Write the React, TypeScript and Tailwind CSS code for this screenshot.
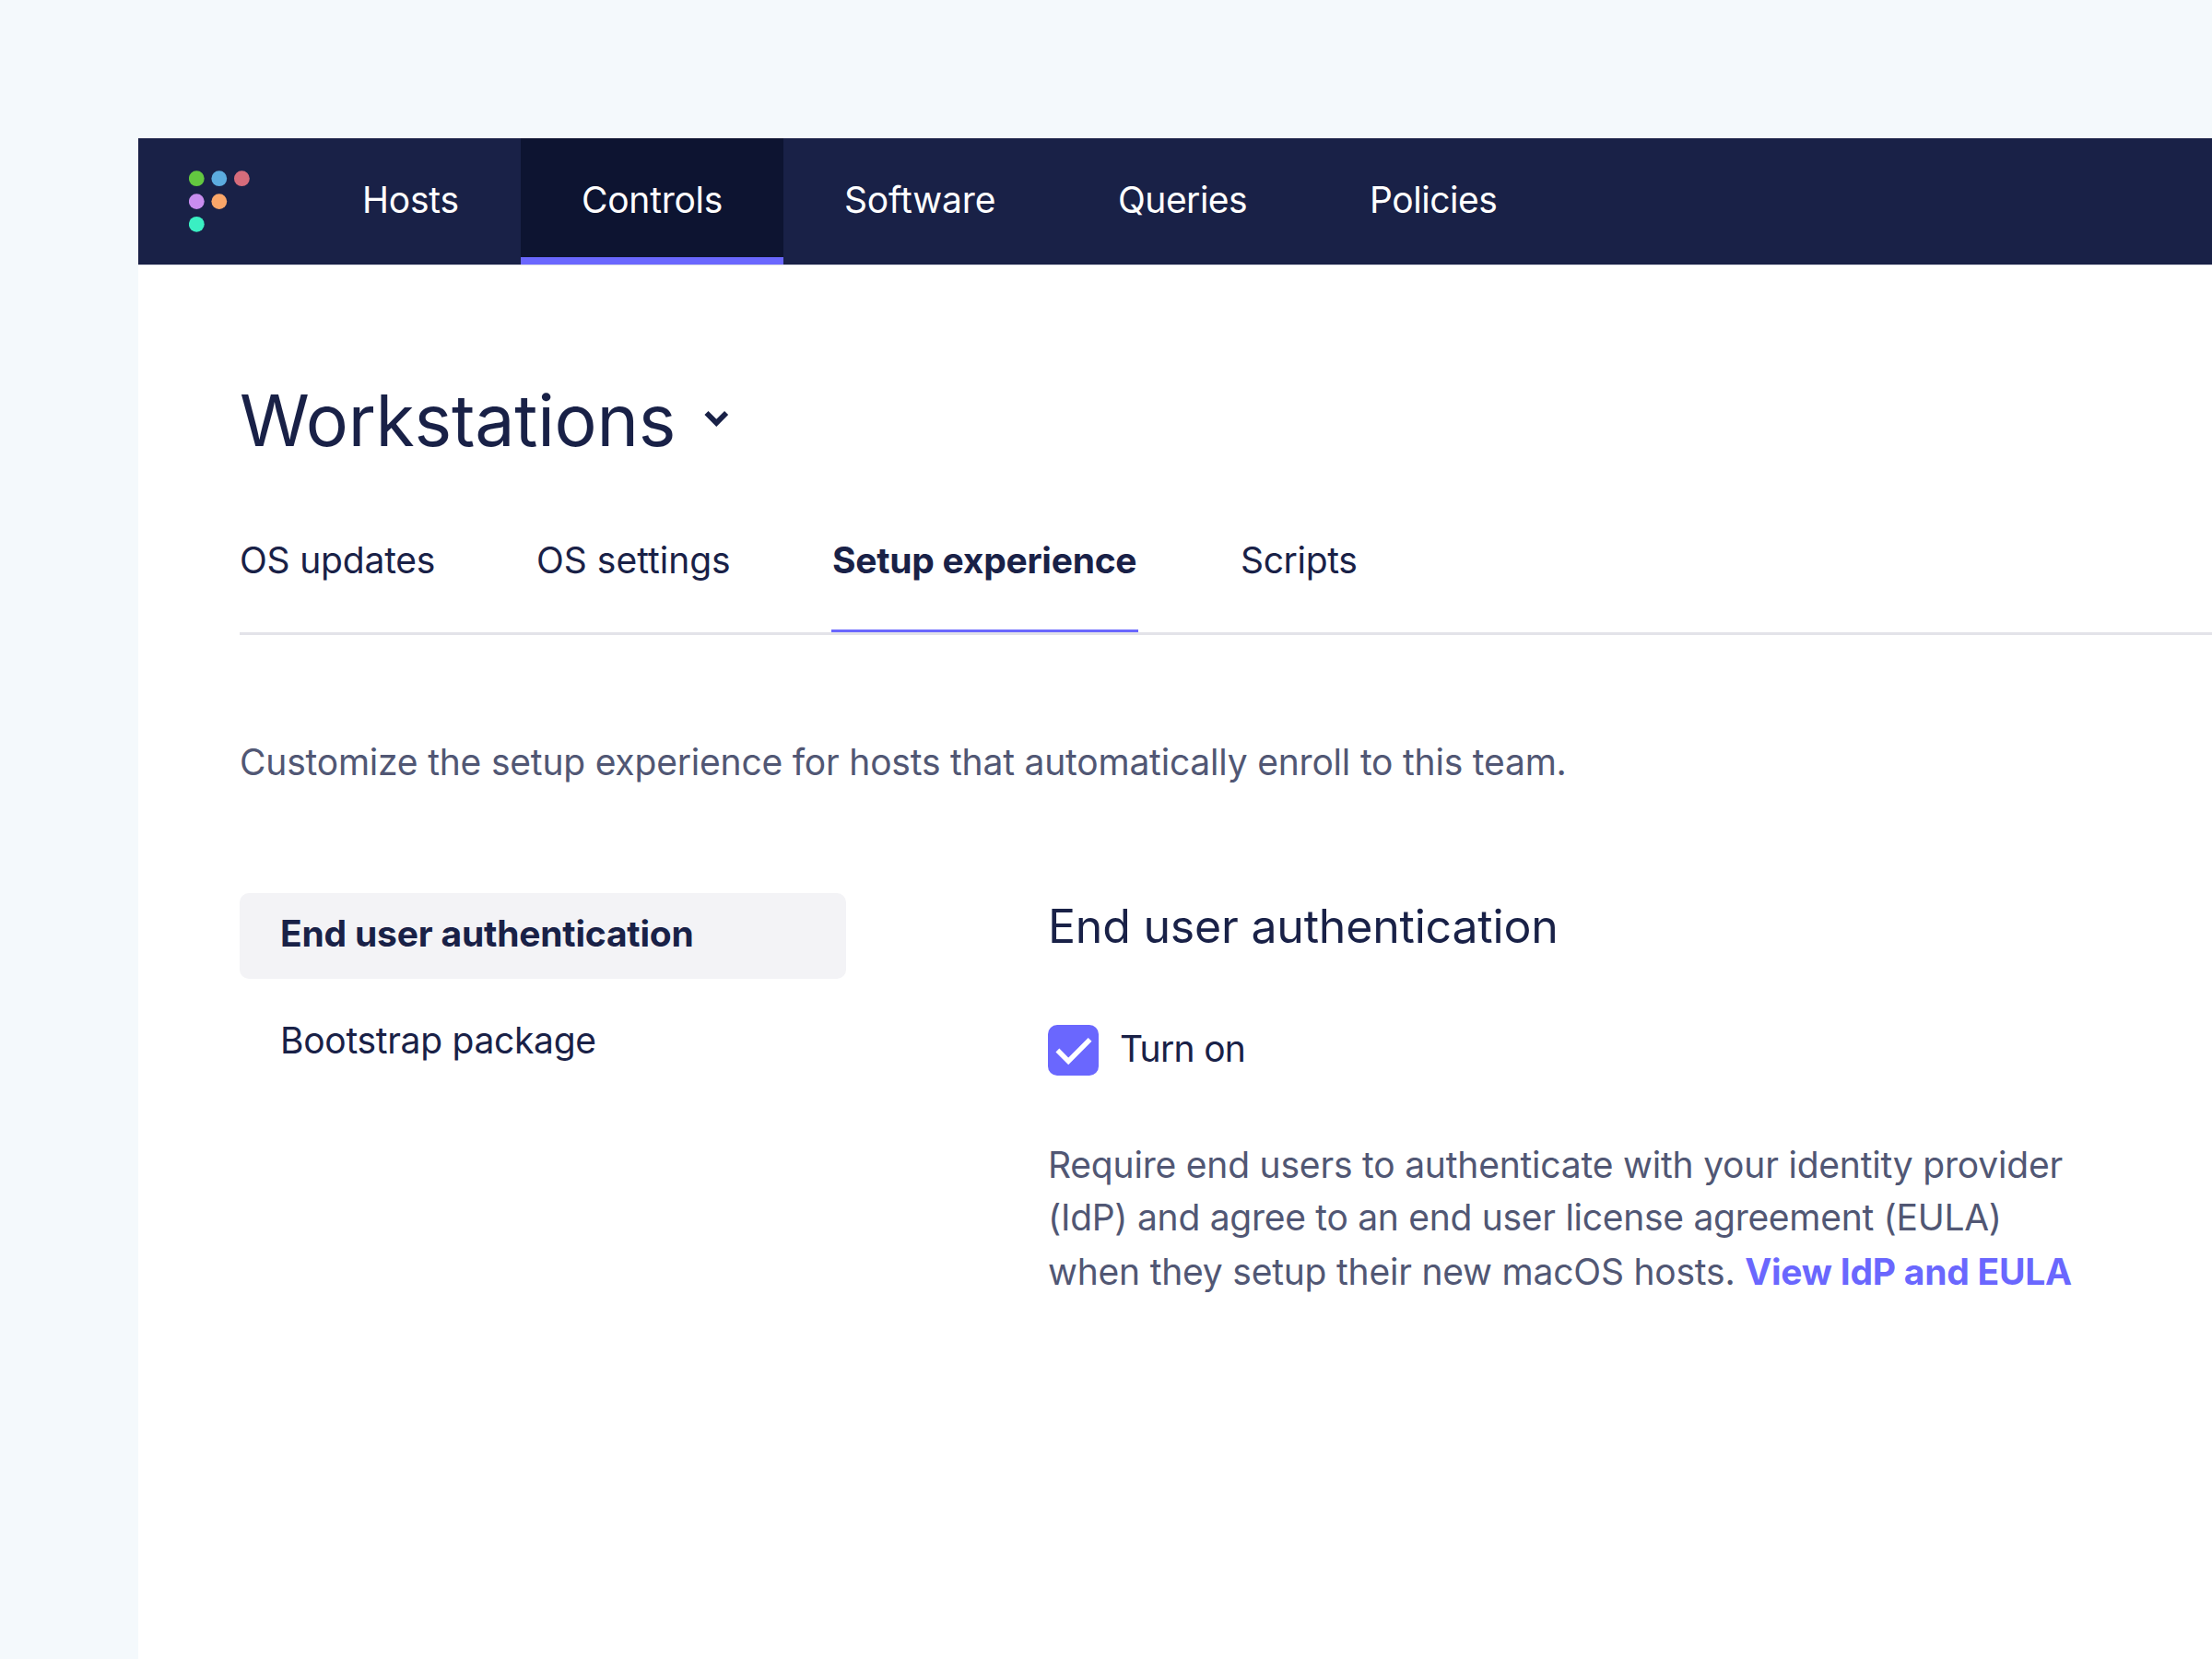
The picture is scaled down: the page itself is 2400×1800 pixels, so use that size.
const dots: [number, number, string][] = [
  [8.3, 8.7, "#63c740"],
  [32.8, 8.7, "#5cabdf"],
  [57.4, 8.7, "#d66c7b"],
  [8.3, 33.6, "#c98def"],
  [32.8, 33.6, "#faa669"],
  [8.3, 58.3, "#3aefc3"],
];

function Logo() {
  return (
    <svg className="ml-[55px] mt-[35px] h-[68px] w-[66px] shrink-0" viewBox="0 0 66 68">
      {dots.map(([x, y, c]) => (
        <circle key={c} cx={x} cy={y} r="8.4" fill={c} />
      ))}
    </svg>
  );
}

function NavItem({ label, className }: { label: string; className: string }) {
  return <div className={`h-[137px] shrink-0 pl-[66px] pt-[43px] text-[39px] leading-[48px] text-white ${className}`}>{label}</div>;
}

export default function App() {
  return (
    <div className="h-[1800px] w-[2400px] overflow-hidden whitespace-nowrap bg-[#f4f9fc] pl-[150px] pt-[150px] font-['Inter',sans-serif] text-[#192147]">
      <div className="h-[1650px] bg-white">
        <nav className="flex h-[138px] border-b border-[#dddee6] bg-[#192147]">
          <Logo />
          <NavItem label="Hosts" className="ml-[56px] w-[238px] tracking-[-0.2px]" />
          <NavItem label="Controls" className="w-[285px] border-b-[8px] border-[#6a67fe] bg-[#0d1431] tracking-[-0.25px]" />
          <NavItem label="Software" className="w-[297px] tracking-[-0.15px]" />
          <NavItem label="Queries" className="w-[273px] tracking-[-0.5px]" />
          <NavItem label="Policies" className="w-[274px] tracking-[-0.45px]" />
        </nav>
        <main className="pl-[110px]">
          <div className="flex h-[279px] items-start">
            <h1 className="mt-[120px] text-[77px] leading-[96px] tracking-[-0.25px]">Workstations</h1>
            <svg className="ml-[30px] mt-[156px] h-[20px] w-[28px]" viewBox="0 0 28 20" fill="none" stroke="#192147" strokeWidth="5.8">
              <path d="M3.5 4l10.8 10.8L25.1 4" />
            </svg>
          </div>
          <div className="flex h-[122px] items-start border-b-[3px] border-[#e3e3e9] text-[39px] leading-[48px]">
            <span className="mt-[17px] w-[322px] tracking-[-0.2px]">OS updates</span>
            <span className="mt-[17px] w-[320px]">OS settings</span>
            <span className="mr-[111px] h-[119px] w-[333px] border-b-[3px] border-[#6a67fe] pl-[1px] pt-[17px] font-bold tracking-[-0.26px]">Setup experience</span>
            <span className="mt-[17px] tracking-[-0.35px]">Scripts</span>
          </div>
          <p className="mt-[113px] text-[39px] leading-[50px] tracking-[-0.2px] text-[#515774]">
            Customize the setup experience for hosts that automatically enroll to this team.
          </p>
          <div className="mt-[117px] flex">
            <div className="w-[658px] text-[39px] leading-[48px]">
              <div className="h-[93px] rounded-[10px] bg-[#f3f3f6] pl-[44px] pt-[20px] font-bold tracking-[-0.2px]">End user authentication</div>
              <div className="pl-[44px] pt-[43px] tracking-[-0.3px]">Bootstrap package</div>
            </div>
            <section className="ml-[219px]">
              <h2 className="mt-[5px] text-[50px] leading-[62px] tracking-[-0.2px]">End user authentication</h2>
              <div className="mt-[76px] flex h-[55px]">
                <svg className="h-[55px] w-[55px]" viewBox="0 0 55 55" fill="none">
                  <rect width="55" height="55" rx="10" fill="#6a67fe" />
                  <path d="M10.4 27.5l11.8 11.9L45.6 15.8" stroke="#fff" strokeWidth="5.4" />
                </svg>
                <span className="ml-[23px] text-[39px] leading-[52px] tracking-[-0.7px]">Turn on</span>
              </div>
              <p className="mt-[68px] text-[39px] text-[#515774]">
                <span className="block h-[57px] leading-[57px] tracking-[-0.2px]">Require end users to authenticate with your identity provider</span>
                <span className="block h-[59px] leading-[57px] tracking-[-0.28px]">(IdP) and agree to an end user license agreement (EULA)</span>
                <span className="block leading-[57px] tracking-[-0.21px]">
                  when they setup their new macOS hosts. <b className="font-bold tracking-[-0.25px] text-[#6a67fe]">View IdP and EULA</b>
                </span>
              </p>
            </section>
          </div>
        </main>
      </div>
    </div>
  );
}
